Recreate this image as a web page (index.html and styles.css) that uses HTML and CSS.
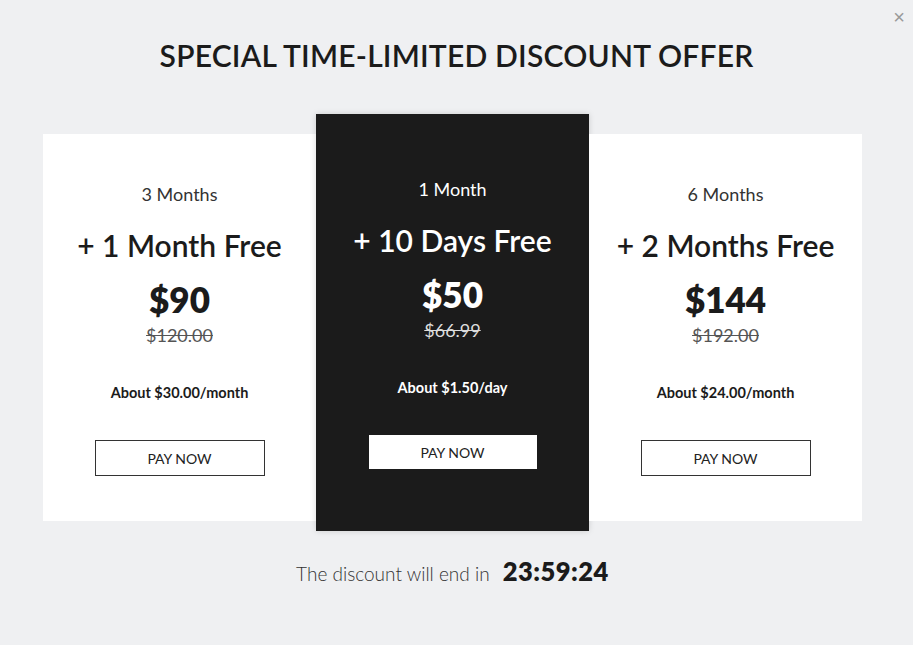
FILE: index.html
```html
<!DOCTYPE html>
<html lang="en">
<head>
<meta charset="UTF-8" />
<meta name="viewport" content="width=device-width, initial-scale=1.0"/>
<title>Discount Offer</title>
<link rel="stylesheet" href="styles.css">
</head>
<body>
<div class="modal">
<button class="close" aria-label="Close">&times;</button>
<h1>SPECIAL TIME-LIMITED DISCOUNT OFFER</h1>
<div class="plans">
<div class="plan">
<div class="term">3 Months</div>
<div class="bonus">+ 1 Month Free</div>
<div class="price">$90</div>
<div class="old">$120.00</div>
<div class="per">About $30.00/month</div>
<button class="pay">PAY NOW</button>
</div>
<div class="plan featured">
<div class="term">1 Month</div>
<div class="bonus">+ 10 Days Free</div>
<div class="price">$50</div>
<div class="old">$66.99</div>
<div class="per">About $1.50/day</div>
<button class="pay">PAY NOW</button>
</div>
<div class="plan">
<div class="term">6 Months</div>
<div class="bonus">+ 2 Months Free</div>
<div class="price">$144</div>
<div class="old">$192.00</div>
<div class="per">About $24.00/month</div>
<button class="pay">PAY NOW</button>
</div>
</div>
<div class="timer">
<span class="timer-label">The discount will end in</span>
<span class="timer-value">23:59:24</span>
</div>
</div>
</body>
</html>
```

FILE: styles.css
```css
body {
  margin: 0;
  background: #eff0f2;
  font-family: Lato, 'Noto Sans', sans-serif;
  color: #1b1b1b;
}
.modal {
  position: relative;
  width: 913px;
  height: 645px;
  padding-top: 36px;
  box-sizing: border-box;
}
.close {
  position: absolute;
  top: 7px;
  right: 8px;
  background: none;
  border: none;
  color: #999;
  font-size: 20px;
  line-height: 20px;
  padding: 0;
  cursor: pointer;
  font-family: Arial, sans-serif;
}
h1 {
  margin: 0;
  text-align: center;
  font-size: 30px;
  font-weight: 600;
  line-height: 38px;
  letter-spacing: 0.2px;
}
.plans {
  display: flex;
  align-items: flex-start;
  width: 819px;
  margin: 60px 0 0 43px;
}
.plan {
  flex: 1;
  height: 387px;
  background: #fff;
  text-align: center;
  padding-top: 49px;
  box-sizing: border-box;
  display: flex;
  flex-direction: column;
  align-items: center;
}
.plan.featured {
  height: 417px;
  margin-top: -20px;
  padding-top: 64px;
  background: #1b1b1b;
  color: #fff;
  box-shadow: 0 0 6px rgba(0, 0, 0, 0.15);
}
.term {
  font-size: 18px;
  line-height: 22px;
  color: #333;
}
.featured .term {
  color: #fff;
}
.bonus {
  margin-top: 23px;
  font-size: 30px;
  font-weight: 600;
  line-height: 34px;
}
.price {
  margin-top: 17px;
  font-size: 35px;
  font-weight: 800;
  line-height: 40px;
}
.old {
  margin-top: 4px;
  font-size: 18px;
  line-height: 24px;
  color: #555;
  text-decoration: line-through;
}
.featured .old {
  color: #ddd;
}
.per {
  margin-top: 37px;
  font-size: 14.5px;
  font-weight: 700;
  line-height: 18px;
}
.pay {
  margin-top: 38px;
  width: 170px;
  height: 36px;
  background: #fff;
  border: 1px solid #333;
  font-family: inherit;
  font-size: 14px;
  color: #222;
  cursor: pointer;
}
.featured .pay {
  width: 168px;
  height: 34px;
  border-color: #fff;
}
.timer {
  margin-top: 25px;
  margin-right: 8px;
  text-align: center;
  display: flex;
  justify-content: center;
  align-items: baseline;
  gap: 13px;
}
.timer-label {
  font-size: 19px;
  font-weight: 300;
  color: #333;
}
.timer-value {
  font-size: 25.5px;
  font-weight: 800;
  letter-spacing: 0.5px;
}
```
